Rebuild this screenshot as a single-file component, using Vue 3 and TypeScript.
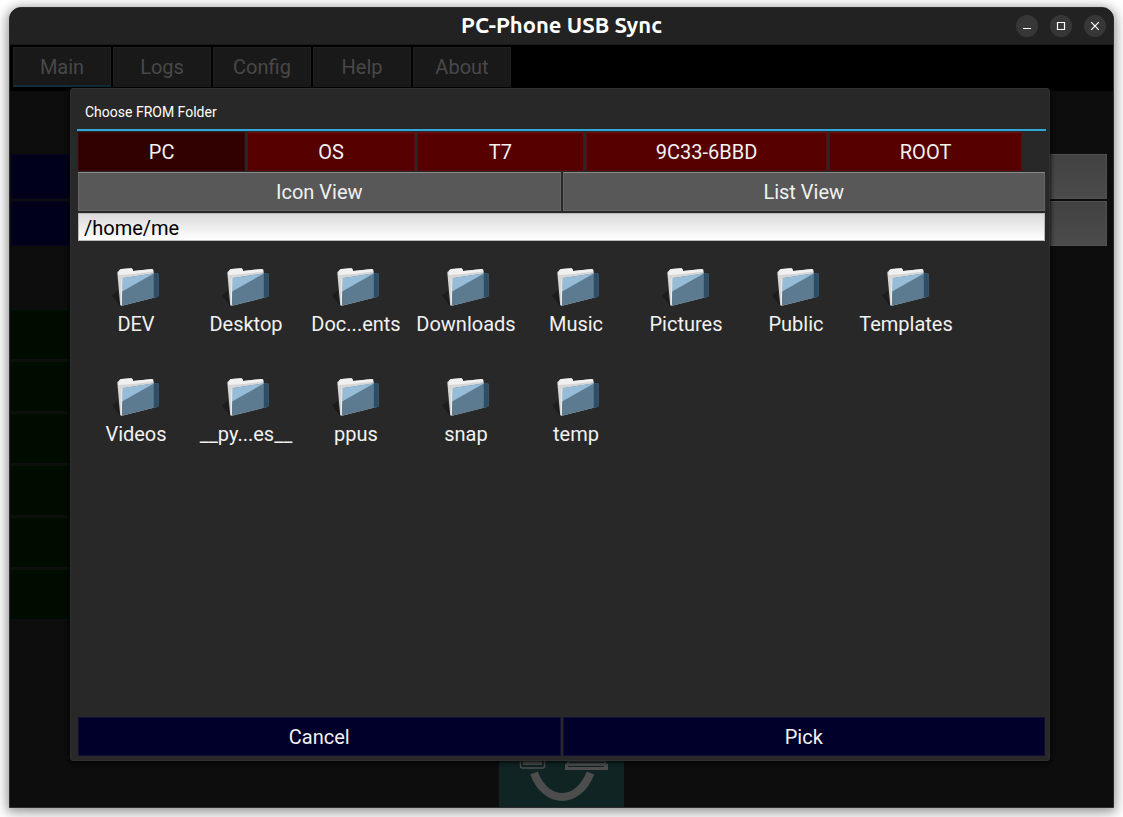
<script setup lang="ts">
import { ref } from 'vue'

interface Drive {
  name: string
  size: string
}

const tabs: string[] = ['Main', 'Logs', 'Config', 'Help', 'About']
const drives: Drive[] = [
  { name: 'PC', size: 'small' },
  { name: 'OS', size: 'small' },
  { name: 'T7', size: 'small' },
  { name: '9C33-6BBD', size: 'large' },
  { name: 'ROOT', size: 'medium' },
]
const folders: string[] = [
  'DEV', 'Desktop', 'Doc...ents', 'Downloads', 'Music', 'Pictures', 'Public', 'Templates',
  'Videos', '__py...es__', 'ppus', 'snap', 'temp',
]
const activeTab = ref('Main')
const activeDrive = ref('PC')
const path = ref('/home/me')
</script>

<template>
  <div class="desktop">
    <div class="window">
      <header class="titlebar">
        <h1>PC-Phone USB Sync</h1>
        <div class="controls">
          <button type="button" aria-label="Minimize">
            <svg viewBox="0 0 22 22"><path d="M7 13.5h8" /></svg>
          </button>
          <button type="button" aria-label="Maximize">
            <svg viewBox="0 0 22 22"><path d="M7.5 7.5h7v7h-7z" /></svg>
          </button>
          <button type="button" aria-label="Close">
            <svg viewBox="0 0 22 22"><path d="M7.2 7.2l7.6 7.6M14.8 7.2l-7.6 7.6" /></svg>
          </button>
        </div>
      </header>

      <nav class="tabs">
        <button
          v-for="tab in tabs"
          :key="tab"
          type="button"
          :class="{ active: tab === activeTab }"
          @click="activeTab = tab"
        >{{ tab }}</button>
      </nav>

      <main class="content">
        <div class="paths">
          <div v-for="n in 2" :key="n" class="path-row">
            <span class="navy"></span>
            <span class="grey"></span>
          </div>
        </div>
        <div class="options">
          <span v-for="n in 6" :key="n"></span>
        </div>
        <button class="sync" type="button" aria-label="Sync">
          <svg viewBox="0 0 125 125">
            <g fill="none" stroke="#4d4d4d">
              <rect x="21.5" y="30" width="24" height="56" rx="2" stroke-width="1.5" />
              <path d="M35 91C47 123 79 123 91.500 91" stroke-width="8" />
            </g>
            <path d="M24 34h19v49h-19z" fill="#4d4d4d" />
            <path d="M68 76h39v5l2 1v6h-43v-6l2-1z" fill="#4d4d4d" />
            <path d="M70 80.500h35M69 84.500h36" stroke="#102424" />
          </svg>
        </button>
      </main>

      <section class="dialog" role="dialog" aria-labelledby="dialog-title">
        <h2 id="dialog-title">Choose FROM Folder</h2>
        <div class="dialog-body">
          <div class="drives">
            <button
              v-for="drive in drives"
              :key="drive.name"
              type="button"
              :class="[drive.size, { active: drive.name === activeDrive }]"
              @click="activeDrive = drive.name"
            >{{ drive.name }}</button>
          </div>
          <div class="views">
            <button type="button">Icon View</button>
            <button type="button">List View</button>
          </div>
          <input v-model="path" type="text" aria-label="Folder path" spellcheck="false">
          <div class="folders">
            <button v-for="folder in folders" :key="folder" type="button">
              <svg viewBox="0 0 48 48">
                <path d="M0 31.500L5.500 27l3 15.500z" fill="#1c1c1c" />
                <path d="M5.300 8.500q0-1 1.200-1.200L8 5.600q.4-.6 1.500-.7l9.500-.6q1 0 1.400.8l.8 1.800L40 5q1.200-.1 1.400 1l3 27-33.400 8.500-1.800.2q-.8 0-1-.9z" fill="#d6d6d6" />
                <path d="M6.500 8L8 5.600q.4-.6 1.500-.7l9.500-.6q1 0 1.400.8l.8 1.800L40 5l1.500 2.500-20 2.500-15 1z" fill="#f1f0f0" />
                <path d="M10.300 15.500q.1-1.300 1.300-1.500l33-5q2-.2 2 1.600v20.600q0 1.500-1.500 1.900L11 41.500q-1.500.3-1.500-1z" fill="#5c7b91" />
                <path d="M10.300 15.500q.1-1.300 1.300-1.500l30.700-4.700L10.100 27.500z" fill="#97bcd7" />
                <path d="M41.800 9.400l2.800-.4q2-.2 2 1.600v20.600q0 1.500-1.500 1.900l-3.300.8z" fill="#2d4e67" />
                <path d="M10 14.500L9.300 41" fill="none" stroke="#efefef" />
              </svg>
              <span>{{ folder }}</span>
            </button>
          </div>
          <footer>
            <button type="button">Cancel</button>
            <button type="button">Pick</button>
          </footer>
        </div>
      </section>
    </div>
  </div>
</template>

<style>
html,
body {
  background: #fff;
}
</style>

<style scoped>
* {
  box-sizing: border-box;
}

button,
input {
  font: 20px/24px Roboto, sans-serif;
  border: 0;
  padding: 0;
  margin: 0;
  color: #f2f2f2;
  border-radius: 0;
}

.desktop {
  display: flex;
  min-height: 100vh;
  padding: 7px 9px 9px;
  overflow: hidden;
  font-family: Roboto, sans-serif;
}

.window {
  position: relative;
  display: flex;
  flex: 1;
  flex-direction: column;
  overflow: hidden;
  background: #000;
  border: 1px solid #2d2d2d;
  border-radius: 12px 12px 0 0;
  box-shadow: 0 2px 8px 2px rgba(0, 0, 0, 0.25), 0 3px 18px rgba(0, 0, 0, 0.25);
}

.titlebar {
  display: grid;
  grid-template-columns: 1fr auto 1fr;
  align-items: center;
  height: 37px;
  padding: 0 7px;
  background: #222;
  border-bottom: 1px solid #191919;
}

.titlebar h1 {
  grid-column: 2;
  margin: 0;
  padding-bottom: 2px;
  color: #fff;
  font: bold 22px/30px Ubuntu, "Noto Sans", sans-serif;
}

.controls {
  display: flex;
  gap: 12px;
  justify-content: flex-end;
}

.controls button {
  width: 22px;
  height: 22px;
  background: #373737;
  border-radius: 50%;
}

.controls svg {
  display: block;
  fill: none;
  stroke: #fff;
  stroke-width: 1.2;
}

.tabs {
  display: flex;
  gap: 2px;
  height: 46px;
  padding: 2px 3px 4px;
}

.tabs button {
  width: 98px;
  color: #484848;
  background: #191919;
  border: 1px solid #202020;
}

.tabs .active {
  border-bottom: 2px solid #12303c;
}

.content {
  display: flex;
  flex: 1;
  flex-direction: column;
  padding: 63px 6px 0 1px;
  background: #0d0d0d;
}

.paths {
  display: grid;
  gap: 2px;
}

.path-row {
  display: grid;
  grid-template-columns: 1fr 1fr;
  height: 45px;
}

.navy {
  background: #00001a;
  border: 1px solid #05051d;
}

.grey {
  background: linear-gradient(#424242, #4b4b4b);
  border: 1px solid #505050;
}

.options {
  display: grid;
  gap: 2px;
  width: 50%;
  margin-top: 63px;
}

.options span {
  height: 50px;
  background: #000c00;
  border-top: 1px solid #061506;
}

.sync {
  align-self: center;
  width: 125px;
  height: 125px;
  margin: auto 0 0 5px;
  background: #102424;
}

.sync svg {
  display: block;
}

.dialog {
  position: absolute;
  inset: 80px 63px 46px 60px;
  display: flex;
  flex-direction: column;
  padding: 1px 3px 4px 6px;
  background: #282828;
  border: 1px solid #303030;
  border-radius: 3px;
  box-shadow: 0 1px 5px #000;
}

.dialog h2 {
  margin: 0;
  padding: 13px 8px 8px;
  color: #fff;
  font: 14px/18px Roboto, sans-serif;
  border-bottom: 2px solid #30a7d7;
}

.dialog-body {
  display: flex;
  flex: 1;
  flex-direction: column;
  padding: 1px 1px 0;
}

.drives {
  display: flex;
  gap: 2px;
  padding-right: 23px;
}

.drives button {
  height: 39px;
  background: #560000;
  border: 1px solid #5d0d0d;
  border-top-color: #711010;
}

.drives .small {
  flex: 168;
}

.drives .medium {
  flex: 194;
}

.drives .large {
  flex: 243;
}

.drives .active {
  background: #310000;
  border-color: #3a0808;
}

.views,
footer {
  display: flex;
  gap: 2px;
}

.views {
  margin-top: 1px;
}

.views button {
  flex: 1;
  height: 39px;
  background: #585858;
  border: 1px solid #666;
  border-top-color: #8b8b8b;
}

.dialog input {
  width: 100%;
  height: 28px;
  margin-top: 2px;
  padding: 2px 5px 0;
  color: #000;
  background: linear-gradient(#dadada, #fff);
  border: 1px solid #bbb;
}

.folders {
  display: grid;
  grid-template-columns: repeat(auto-fill, 110px);
  grid-auto-rows: 110px;
  flex: 1;
  padding: 23px 4px 0 3px;
}

.folders button {
  display: flex;
  flex-direction: column;
  align-items: center;
  background: none;
}

.folders svg {
  width: 48px;
  height: 48px;
}

.folders span {
  white-space: nowrap;
}

footer button {
  flex: 1;
  height: 39px;
  background: #00002b;
  border: 1px solid #101035;
}
</style>
